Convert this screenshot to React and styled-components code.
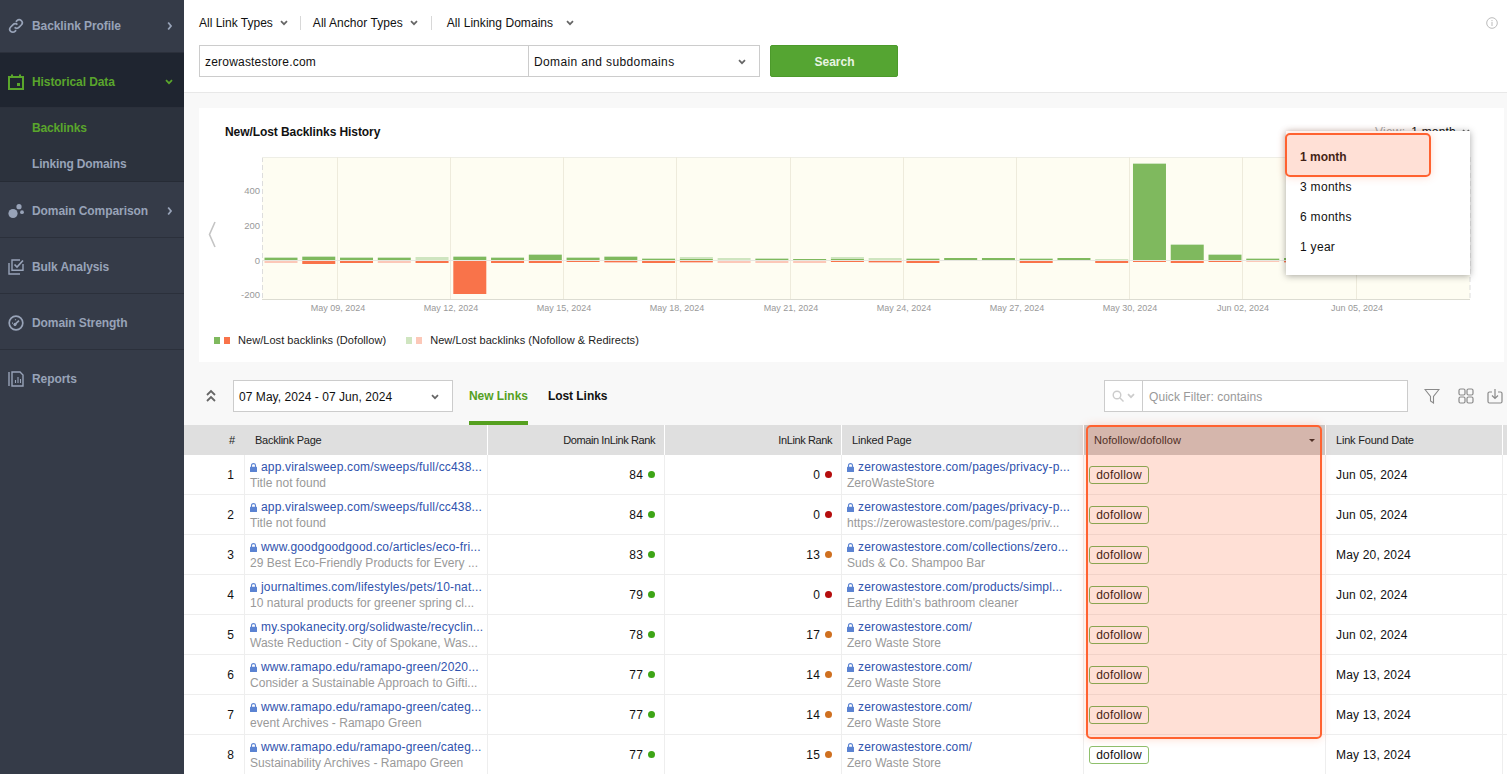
import React from "react";
import styled, { createGlobalStyle } from "styled-components";

const Global = createGlobalStyle`
  html, body { margin: 0; padding: 0; height: 100%; overflow: hidden; background: #fff; }
  body { font-family: "Liberation Sans", Arial, sans-serif; font-size: 12px; color: #111; }
  * { box-sizing: border-box; }
`;

const Shell = styled.div`
  position: relative;
  display: flex;
  width: 1507px;
  height: 774px;
  overflow: hidden;
`;

/* ---------- sidebar ---------- */
const Side = styled.nav`
  flex: 0 0 184px;
  background: #353b48;
  display: flex;
  flex-direction: column;
`;
const NavItem = styled.div`
  height: ${p => p.$h || 56}px;
  flex: none;
  display: flex;
  align-items: center;
  padding: ${p => p.$pt ?? 2}px 11px 0 8px;
  gap: 8px;
  font-weight: bold;
  letter-spacing: -0.08px;
  color: ${p => (p.$active ? "#5aa62c" : "#98a3b8")};
  background: ${p => (p.$active ? "#1f2530" : "transparent")};
  border-bottom: ${p => (p.$last ? "none" : "1px solid #2b303b")};
  svg.lead { flex: none; }
  span { flex: 1; }
`;
const SubMenu = styled.div`
  height: 74px;
  flex: none;
  background: #2c323d;
  border-bottom: 1px solid #262b35;
  display: flex;
  flex-direction: column;
  padding-top: 2px;
`;
const SubItem = styled.div`
  height: 36px;
  flex: none;
  display: flex;
  align-items: center;
  padding-left: 32px;
  font-weight: bold;
  letter-spacing: -0.15px;
  color: ${p => (p.$active ? "#5aa62c" : "#98a3b8")};
`;

/* ---------- main ---------- */
const Main = styled.main`
  flex: 1;
  min-width: 0;
  display: flex;
  flex-direction: column;
  background: #f8f8f8;
`;
const Top = styled.header`
  height: 93px;
  flex: none;
  background: #fff;
  border-bottom: 1px solid #e8e8e8;
  padding: 15px 9px 0 15px;
  display: flex;
  flex-direction: column;
`;
const FilterRow = styled.div`
  height: 16px;
  display: flex;
  align-items: center;
`;
const Filter = styled.div`
  display: flex;
  align-items: center;
  letter-spacing: ${p => p.$ls || 0}px;
  gap: ${p => p.$gap || 7}px;
  padding-right: ${p => p.$pr || 12}px;
  margin-right: ${p => p.$mr || 12}px;
  height: 14px;
  border-right: ${p => (p.$sep ? "1px solid #d8d8d8" : "none")};
  margin-left: ${p => p.$ml || 0}px;
`;
const Info = styled.div`
  margin-left: auto;
  line-height: 0;
`;
const SearchRow = styled.div`
  display: flex;
  margin-top: 14px;
  height: 32px;
`;
const UrlInput = styled.div`
  width: 330px;
  border: 1px solid #ccc;
  background: #fff;
  display: flex;
  align-items: center;
  padding: 1px 0 0 5px;
  letter-spacing: 0.2px;
`;
const ScopeSelect = styled.div`
  width: 232px;
  margin-left: -1px;
  border: 1px solid #ccc;
  background: #fff;
  display: flex;
  align-items: center;
  justify-content: space-between;
  padding: 1px 13px 0 5px;
  letter-spacing: 0.37px;
`;
const SearchBtn = styled.div`
  width: 128px;
  margin-left: 10px;
  background: #55a532;
  border: 1px solid #4c9a2b;
  border-radius: 2px;
  color: #e9f4e2;
  font-weight: bold;
  display: flex;
  align-items: center;
  justify-content: center;
  padding: 1px 0 0 1px;
`;

/* ---------- chart ---------- */
const Card = styled.section`
  flex: none;
  height: 254px;
  margin: 15px 3px 0 15px;
  background: #fff;
  display: flex;
  flex-direction: column;
`;
const CardHead = styled.div`
  display: flex;
  justify-content: space-between;
  padding: 17px 34px 0 26px;
  height: 42px;
  flex: none;
`;
const CardTitle = styled.div`
  font-weight: bold;
  line-height: 14px;
  letter-spacing: -0.08px;
`;
const ViewLabel = styled.div`
  display: flex;
  align-items: center;
  height: 14px;
  color: #aaa;
  letter-spacing: 0.2px;
  b { font-weight: normal; color: #111; margin: 0 6px 0 6px; }
`;
const ChartSvg = styled.svg`
  display: block;
  flex: none;
  text { font-family: "Liberation Sans", Arial, sans-serif; }
`;
const Legend = styled.div`
  display: flex;
  align-items: center;
  height: 14px;
  margin-top: 15px;
  padding-left: 15px;
  font-size: 11px;
  letter-spacing: 0.05px;
  color: #222;
`;
const Swatch = styled.i`
  width: 6px;
  height: 7px;
  margin-right: ${p => p.$mr}px;
  background: ${p => p.$c};
`;
const LegendText = styled.span`
  margin-right: ${p => p.$mr || 0}px;
`;

/* ---------- toolbar ---------- */
const Toolbar = styled.div`
  height: 63px;
  padding: 18px 0 0 21px;
  flex: none;
  display: flex;
  align-items: flex-start;
`;
const Collapse = styled.div`
  width: 28px;
  height: 32px;
  display: flex;
  align-items: center;
  color: #666;
`;
const DateSelect = styled.div`
  width: 220px;
  height: 32px;
  border: 1px solid #ccc;
  background: #fff;
  display: flex;
  align-items: center;
  justify-content: space-between;
  padding: 1px 13px 0 5px;
  letter-spacing: 0.05px;
`;
const Tabs = styled.div`
  display: flex;
  margin-left: 16px;
  gap: 20px;
`;
const Tab = styled.div`
  height: 45px;
  padding-top: 9px;
  line-height: 14px;
  font-weight: bold;
  letter-spacing: -0.05px;
  color: ${p => (p.$active ? "#55a01f" : "#111")};
  border-bottom: 4px solid ${p => (p.$active ? "#55a01f" : "transparent")};
`;
const Quick = styled.div`
  margin-left: auto;
  width: 304px;
  height: 32px;
  border: 1px solid #ccc;
  background: #fff;
  display: flex;
`;
const QuickIcon = styled.div`
  width: 38px;
  border-right: 1px solid #ccc;
  display: flex;
  align-items: center;
  justify-content: center;
  gap: 3px;
  color: #ccc;
`;
const QuickText = styled.div`
  flex: 1;
  display: flex;
  align-items: center;
  padding: 1px 0 0 6px;
  color: #999;
  letter-spacing: 0.06px;
`;
const ToolIcons = styled.div`
  display: flex;
  height: 32px;
  align-items: center;
  padding: 0 4px 0 16px;
  gap: 13px;
  color: #8a8a8a;
  svg:first-child { margin-right: 5px; }
`;

/* ---------- table ---------- */
const Table = styled.div`
  flex: 1;
  min-height: 0;
  display: grid;
  grid-template-columns: 61px 243px 177px 177px 242px 242px 177px 4px;
  grid-auto-rows: 40px;
  grid-template-rows: 30px;
  background: #fff;
`;
const Th = styled.div`
  background: ${p => (p.$sorted ? "#cbcbcb" : "#dfdfdf")};
  display: flex;
  align-items: center;
  font-size: 11px;
  letter-spacing: ${p => p.$ls ?? -0.2}px;
  padding: 0 ${p => p.$pr || 0}px 0 ${p => p.$pl || 0}px;
  justify-content: ${p => (p.$right ? "flex-end" : "flex-start")};
  border-right: ${p => (p.$nosep ? "none" : "1px solid #fff")};
  color: #222;
  position: relative;
`;
const Sort = styled.i`
  position: absolute;
  right: 10px;
  top: 14px;
  border-left: 3px solid transparent;
  border-right: 3px solid transparent;
  border-top: 3px solid #222;
`;
const Td = styled.div`
  border-bottom: 1px solid #eee;
  border-right: ${p => (p.$nosep ? "none" : "1px solid #eee")};
  display: flex;
  align-items: ${p => (p.$stack ? "flex-start" : "center")};
  flex-direction: ${p => (p.$stack ? "column" : "row")};
  justify-content: ${p => (p.$right ? "flex-end" : p.$stack ? "center" : "flex-start")};
  padding: ${p => (p.$stack ? 1 : 0)}px ${p => p.$pr || 0}px 0 ${p => p.$pl || 0}px;
  white-space: nowrap;
  overflow: hidden;
  letter-spacing: 0.18px;
`;
const LinkLine = styled.div`
  display: flex;
  align-items: center;
  gap: 4px;
  color: #2f52ad;
  line-height: 16px;
  svg { flex: none; }
`;
const Sub = styled.div`
  color: #999;
  line-height: 15px;
  margin-top: 1px;
  letter-spacing: 0.03px;
`;
const Dot = styled.i`
  width: 7px;
  height: 7px;
  border-radius: 50%;
  margin-left: 5px;
  background: ${p => p.$c};
`;
const Tag = styled.span`
  height: 18px;
  width: 60px;
  border: 1px solid ${p => (p.$covered ? "#6fb558" : "#8fc06c")};
  border-radius: 3px;
  display: flex;
  align-items: center;
  justify-content: center;
  color: #111;
`;

/* ---------- overlays ---------- */
const Menu = styled.div`
  position: absolute;
  left: 1286px;
  top: 131px;
  width: 184px;
  height: 144px;
  background: #fff;
  box-shadow: 0 1px 7px rgba(0, 0, 0, 0.35);
  padding-top: 11px;
`;
const MenuItem = styled.div`
  height: 30px;
  display: flex;
  align-items: center;
  padding-left: 14px;
  letter-spacing: ${p => (p.$b ? 0 : 0.3)}px;
  font-weight: ${p => (p.$b ? "bold" : "normal")};
`;
const Callout = styled.div`
  position: absolute;
  left: ${p => p.$l}px;
  top: ${p => p.$t}px;
  width: ${p => p.$w}px;
  height: ${p => p.$h}px;
  border: 2px solid #ff6230;
  border-radius: 5px;
  background: rgba(255, 99, 48, 0.2);
  box-shadow: 0 0 8px rgba(255, 98, 48, 0.25);
  pointer-events: none;
`;

/* ---------- icons ---------- */
const Chev = ({ c = "#666", w = 8 }) => (
  <svg width={w} height="6" viewBox="0 0 8 6"><path d="M1 1.2 4 4.2 7 1.2" fill="none" stroke={c} strokeWidth="1.7" /></svg>
);
const ChevR = () => (
  <svg width="6" height="10" viewBox="0 0 6 10"><path d="M1.2 1.5 4 5 1.2 8.5" fill="none" stroke="#98a3b8" strokeWidth="1.8" /></svg>
);
const Lock = () => (
  <svg width="7" height="9" viewBox="0 0 7 9"><path d="M1.5 4V2.6a2 2 0 0 1 4 0V4" fill="none" stroke="#5b83d2" strokeWidth="1.1" /><rect y="3.7" width="7" height="5.3" rx=".6" fill="#5b83d2" /></svg>
);
const IcoLink = () => (
  <svg className="lead" width="16" height="16" viewBox="0 0 16 16" fill="none" stroke="#98a3b8" strokeWidth="1.7"><path d="M6.6 9.4a3 3 0 0 0 4.3 0l2.4-2.4a3 3 0 0 0-4.3-4.3L7.9 3.8" /><path d="M9.4 6.6a3 3 0 0 0-4.3 0L2.7 9a3 3 0 0 0 4.3 4.3l1.1-1.1" /></svg>
);
const IcoCal = () => (
  <svg className="lead" width="16" height="16" viewBox="0 0 16 16" fill="none"><rect x="1" y="3" width="14" height="12" stroke="#5aa62c" strokeWidth="2" /><path d="M4 .5v3M12 .5v3" stroke="#5aa62c" strokeWidth="2" /><rect x="9" y="9" width="3" height="3" fill="#5aa62c" /></svg>
);
const IcoDots = () => (
  <svg className="lead" width="16" height="16" viewBox="0 0 16 16" fill="#98a3b8"><circle cx="5" cy="10.5" r="4.6" /><circle cx="11" cy="3.7" r="2.6" /><circle cx="14" cy="9.2" r="1.9" /></svg>
);
const IcoBulk = () => (
  <svg className="lead" width="16" height="16" viewBox="0 0 16 16" fill="none" stroke="#98a3b8" strokeWidth="1.4"><path d="M1 4v11h11" /><path d="M15 5v6.3H4V1h8" /><path d="M6.5 5.5 9 8l6-6.5" strokeWidth="1.7" /></svg>
);
const IcoGauge = () => (
  <svg className="lead" width="16" height="16" viewBox="0 0 16 16" fill="none" stroke="#98a3b8"><circle cx="8" cy="8" r="6.8" strokeWidth="1.7" /><path d="M7 9.4 11 5.6" strokeWidth="1.7" /><circle cx="7" cy="9.5" r="1.2" fill="#98a3b8" /><path d="M4 8.2h1M7.5 4.3v1" strokeWidth="1.2" /></svg>
);
const IcoReport = () => (
  <svg className="lead" width="16" height="16" viewBox="0 0 16 16" fill="none" stroke="#98a3b8" strokeWidth="1.4"><path d="M1 1v14" /><path d="M4 1h8l3 3v11H4z" /><path d="M7.5 12V9M10 12V6M12.5 12V8" strokeWidth="1.1" /></svg>
);

/* ---------- data ---------- */
const G = "#7fb95e", R = "#f9734a", PG = "#cfe5c0", PR = "#fcc8b8";
// [dofollow new, nofollow new, dofollow lost, nofollow lost] heights in px
const bars = [
  [2, 1, 0, 2], [3, 1, 3, 0], [2, 1, 2, 0], [2, 1, 0, 2], [0, 3, 2, 0], [3, 1, 33, 0],
  [2, 1, 2, 0], [5, 1, 2, 0], [2, 1, 1, 0], [3, 1, 1, 1], [1, 1, 2, 0], [1, 2, 1, 1],
  [0, 2, 0, 2], [1, 1, 0, 2], [1, 0, 0, 2], [1, 2, 1, 0], [0, 2, 1, 1], [1, 1, 2, 0],
  [2, 0, 0, 0], [2, 0, 0, 0], [1, 1, 2, 0], [2, 0, 0, 0], [0, 1, 2, 0], [96, 1, 1, 0],
  [15, 1, 2, 0], [5, 1, 1, 0], [1, 1, 0, 1], [2, 0, 1, 1],
];
const ticks = [
  ["May 09, 2024", 338], ["May 12, 2024", 451], ["May 15, 2024", 564], ["May 18, 2024", 677],
  ["May 21, 2024", 791], ["May 24, 2024", 904], ["May 27, 2024", 1017], ["May 30, 2024", 1130],
  ["Jun 02, 2024", 1243], ["Jun 05, 2024", 1357],
];
const yTicks = [["400", 191], ["200", 226], ["0", 261], ["-200", 295]];

const Chart = () => {
  // coordinates are page pixels; the svg starts at x=199, y=150
  return (
    <ChartSvg width="1305" height="168" viewBox="199 150 1305 168">
      <rect x="262" y="157" width="1208" height="142" fill="#fefdf2" />
      <path d="M262.5 157v142" stroke="#ddd" strokeDasharray="5 3" />
      <path d="M1470 157v142" stroke="#ddd" strokeDasharray="5 3" />
      <path d="M262 157.5h1208" stroke="#eeeee6" />
      <path d="M262 299.5h1208" stroke="#dcdcd2" />
      {ticks.map(([t, x]) => (
        <React.Fragment key={t}>
          <path d={`M${x - 0.5} 157v142`} stroke="#eeebdc" />
          <text x={x} y="311" textAnchor="middle" fontSize="9" fill="#999">{t}</text>
        </React.Fragment>
      ))}
      <path d="M262 260.5h1208" stroke="#e6e6e0" />
      {bars.map((b, i) => {
        const x = 264.5 + i * 37.76;
        return (
          <g key={i}>
            <rect x={x} y={260 - b[0]} width="33" height={b[0]} fill={G} />
            <rect x={x} y={260 - b[0] - b[1]} width="33" height={b[1]} fill={PG} />
            <rect x={x} y="261" width="33" height={b[2]} fill={R} />
            <rect x={x} y={261 + b[2]} width="33" height={b[3]} fill={PR} />
          </g>
        );
      })}
      {yTicks.map(([t, y]) => (
        <text key={t} x="260" y={y + 3} textAnchor="end" fontSize="9.5" fill="#999">{t}</text>
      ))}
      <path d="M215 222 209.5 234.5 215 247" fill="none" stroke="#c4c4c4" strokeWidth="1.6" />
    </ChartSvg>
  );
};

const rows = [
  ["app.viralsweep.com/sweeps/full/cc438...", "Title not found", 84, 0, "zerowastestore.com/pages/privacy-p...", "ZeroWasteStore", "Jun 05, 2024"],
  ["app.viralsweep.com/sweeps/full/cc438...", "Title not found", 84, 0, "zerowastestore.com/pages/privacy-p...", "https://zerowastestore.com/pages/priv...", "Jun 05, 2024"],
  ["www.goodgoodgood.co/articles/eco-fri...", "29 Best Eco-Friendly Products for Every ...", 83, 13, "zerowastestore.com/collections/zero...", "Suds & Co. Shampoo Bar", "May 20, 2024"],
  ["journaltimes.com/lifestyles/pets/10-nat...", "10 natural products for greener spring cl...", 79, 0, "zerowastestore.com/products/simpl...", "Earthy Edith's bathroom cleaner", "Jun 02, 2024"],
  ["my.spokanecity.org/solidwaste/recyclin...", "Waste Reduction - City of Spokane, Was...", 78, 17, "zerowastestore.com/", "Zero Waste Store", "Jun 02, 2024"],
  ["www.ramapo.edu/ramapo-green/2020...", "Consider a Sustainable Approach to Gifti...", 77, 14, "zerowastestore.com/", "Zero Waste Store", "May 13, 2024"],
  ["www.ramapo.edu/ramapo-green/categ...", "event Archives - Ramapo Green", 77, 14, "zerowastestore.com/", "Zero Waste Store", "May 13, 2024"],
  ["www.ramapo.edu/ramapo-green/categ...", "Sustainability Archives - Ramapo Green", 77, 15, "zerowastestore.com/", "Zero Waste Store", "May 13, 2024"],
];
const rankColor = v => (v === 0 ? "#b50d0d" : "#cf7020");

export default function App() {
  return (
    <Shell>
      <Global />
      <Side>
        <NavItem $h={53} $pt={0}><IcoLink /><span>Backlink Profile</span><ChevR /></NavItem>
        <NavItem $h={55} $pt={3} $active><IcoCal /><span>Historical Data</span><Chev c="#5aa62c" /></NavItem>
        <SubMenu>
          <SubItem $active>Backlinks</SubItem>
          <SubItem>Linking Domains</SubItem>
        </SubMenu>
        <NavItem><IcoDots /><span>Domain Comparison</span><ChevR /></NavItem>
        <NavItem><IcoBulk /><span>Bulk Analysis</span></NavItem>
        <NavItem><IcoGauge /><span>Domain Strength</span></NavItem>
        <NavItem $last><IcoReport /><span>Reports</span></NavItem>
      </Side>
      <Main>
        <Top>
          <FilterRow>
            <Filter $sep>All Link Types <Chev /></Filter>
            <Filter $sep $ls={0.05} $pr={13}>All Anchor Types <Chev /></Filter>
            <Filter $ml={3} $gap={12} $ls={0.05}>All Linking Domains <Chev w={10} /></Filter>
            <Info>
              <svg width="12" height="12" viewBox="0 0 12 12" fill="none" stroke="#bbb"><circle cx="6" cy="6" r="5.3" /><path d="M6 5v4M6 3v1.2" /></svg>
            </Info>
          </FilterRow>
          <SearchRow>
            <UrlInput>zerowastestore.com</UrlInput>
            <ScopeSelect>Domain and subdomains <Chev /></ScopeSelect>
            <SearchBtn>Search</SearchBtn>
          </SearchRow>
        </Top>
        <Card>
          <CardHead>
            <CardTitle>New/Lost Backlinks History</CardTitle>
            <ViewLabel>View:<b>1 month</b><Chev /></ViewLabel>
          </CardHead>
          <Chart />
          <Legend>
            <Swatch $c={G} $mr={4} /><Swatch $c={R} $mr={8} />
            <LegendText $mr={20}>New/Lost backlinks (Dofollow)</LegendText>
            <Swatch $c={PG} $mr={4} /><Swatch $c={PR} $mr={8} />
            <LegendText>New/Lost backlinks (Nofollow &amp; Redirects)</LegendText>
          </Legend>
        </Card>
        <Toolbar>
          <Collapse>
            <svg width="12" height="14" viewBox="0 0 12 14" fill="none" stroke="currentColor" strokeWidth="1.8"><path d="M2 6 6 2l4 4M2 12l4-4 4 4" /></svg>
          </Collapse>
          <DateSelect>07 May, 2024 - 07 Jun, 2024 <Chev /></DateSelect>
          <Tabs>
            <Tab $active>New Links</Tab>
            <Tab>Lost Links</Tab>
          </Tabs>
          <Quick>
            <QuickIcon>
              <svg width="12" height="12" viewBox="0 0 12 12" fill="none" stroke="#ccc" strokeWidth="1.4"><circle cx="5" cy="5" r="3.8" /><path d="M8 8l3.5 3.5" /></svg>
              <Chev c="#ccc" />
            </QuickIcon>
            <QuickText>Quick Filter: contains</QuickText>
          </Quick>
          <ToolIcons>
            <svg width="16" height="16" viewBox="0 0 16 16" fill="none" stroke="currentColor" strokeWidth="1.1"><path d="M1 1.5h14L9.5 8.5V15l-3-2V8.5z" /></svg>
            <svg width="16" height="16" viewBox="0 0 16 16" fill="none" stroke="currentColor" strokeWidth="1.2"><rect x="1" y="1" width="6" height="6" rx="1.5" /><rect x="9" y="1" width="6" height="6" rx="1.5" /><rect x="1" y="9" width="6" height="6" rx="1.5" /><rect x="9" y="9" width="6" height="6" rx="1.5" /></svg>
            <svg width="16" height="16" viewBox="0 0 16 16" fill="none" stroke="currentColor" strokeWidth="1.2"><path d="M5 4H2.5A1.5 1.5 0 0 0 1 5.5v8A1.5 1.5 0 0 0 2.5 15h11a1.5 1.5 0 0 0 1.5-1.5v-8A1.5 1.5 0 0 0 13.5 4H11" /><path d="M8 1v9M5 7.5 8 10.5l3-3" /></svg>
          </ToolIcons>
        </Toolbar>
        <Table>
          <Th $right $pr={10} $nosep $ls={0}>#</Th>
          <Th $pl={10} $ls={-0.25}>Backlink Page</Th>
          <Th $right $pr={9} $ls={-0.4}>Domain InLink Rank</Th>
          <Th $right $pr={9} $ls={-0.4}>InLink Rank</Th>
          <Th $pl={10} $ls={-0.16}>Linked Page</Th>
          <Th $pl={10} $ls={0.08} $sorted>Nofollow/dofollow<Sort /></Th>
          <Th $pl={10}>Link Found Date</Th>
          <Th $nosep />
          {rows.map((r, i) => (
            <React.Fragment key={i}>
              <Td $right $pr={10}>{i + 1}</Td>
              <Td $stack $pl={5}>
                <LinkLine><Lock />{r[0]}</LinkLine>
                <Sub>{r[1]}</Sub>
              </Td>
              <Td $right $pr={9}>{r[2]}<Dot $c="#3ea516" /></Td>
              <Td $right $pr={9}>{r[3]}<Dot $c={rankColor(r[3])} /></Td>
              <Td $stack $pl={5}>
                <LinkLine><Lock />{r[4]}</LinkLine>
                <Sub>{r[5]}</Sub>
              </Td>
              <Td $pl={5}><Tag $covered={i < 7}>dofollow</Tag></Td>
              <Td $pl={10}>{r[6]}</Td>
              <Td $nosep />
            </React.Fragment>
          ))}
        </Table>
      </Main>
      <Menu>
        <MenuItem $b>1 month</MenuItem>
        <MenuItem>3 months</MenuItem>
        <MenuItem>6 months</MenuItem>
        <MenuItem>1 year</MenuItem>
      </Menu>
      <Callout $l={1285} $t={133} $w={146} $h={44} />
      <Callout $l={1086} $t={425} $w={236} $h={314} />
    </Shell>
  );
}
